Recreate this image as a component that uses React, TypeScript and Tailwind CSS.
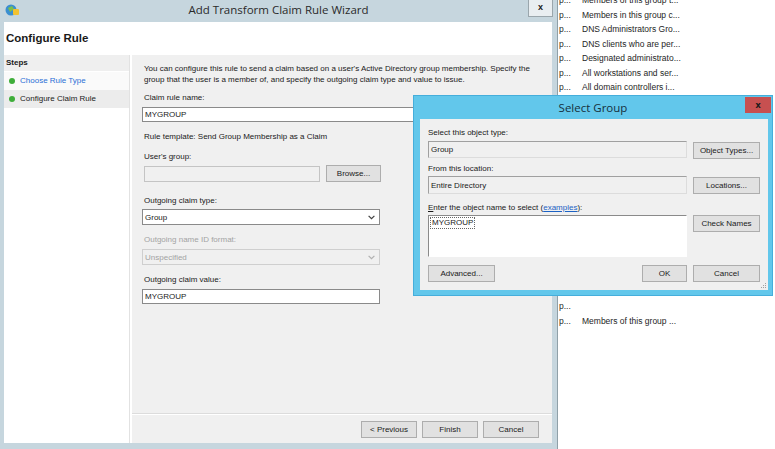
import React from "react";

function Btn({ children, className = "" }: { children: React.ReactNode; className?: string }) {
  return (
    <div
      className={`flex items-center justify-center h-[17px] bg-[#e1e1e1] border border-[#adadad] text-[8px] text-[#1a1a1a] ${className}`}
    >
      {children}
    </div>
  );
}

function Chevron({ color = "#404040" }: { color?: string }) {
  return (
    <svg width="7" height="5" viewBox="0 0 7 5">
      <path d="M0.6 0.8 L3.5 3.7 L6.4 0.8" stroke={color} fill="none" strokeWidth="1.2" />
    </svg>
  );
}

const listRows: (string | null)[] = [
  "Members of this group t...",
  "Members in this group c...",
  "DNS Administrators Gro...",
  "DNS clients who are per...",
  "Designated administrato...",
  "All workstations and ser...",
  "All domain controllers i...",
  null, null, null, null, null, null, null,
  null, null, null, null, null, null, null,
  "",
  "Members of this group ...",
];

export default function App() {
  return (
    <div className="relative w-[775px] h-[449px] overflow-hidden bg-white font-['Liberation_Sans',Arial,sans-serif] text-[#1a1a1a]">
      {/* background list window */}
      <div className="absolute left-[557px] top-0 right-0 bottom-0 bg-white border-l border-[#8fa0a8] text-[8.5px] text-[#1e1e1e]">
        <div className="mt-[-7px] flex flex-col">
          {listRows.map((r, i) => (
            <div key={i} className="h-[14.6px] flex items-center whitespace-nowrap">
              {r !== null && (
                <>
                  <span className="w-[24px] pl-[1px]">p...</span>
                  <span>{r}</span>
                </>
              )}
            </div>
          ))}
        </div>
      </div>

      {/* wizard window */}
      <div className="absolute left-0 top-0 w-[557px] h-[449px] bg-[#c6d6de] flex flex-col">
        <div className="h-[22px] flex items-start">
          <div className="w-[30px] h-[20px] flex items-center pl-[5px]">
            <svg width="15" height="14" viewBox="0 0 15 14">
              <circle cx="6" cy="7" r="5.5" fill="#3b8fd0" />
              <path d="M3 5 L7 3 L9 6 L5 9 Z" fill="#7cc04a" />
              <rect x="8" y="6" width="6" height="6" rx="1" fill="#f2c230" />
            </svg>
          </div>
          <div className="flex-1 h-[20px] flex items-center justify-center font-['Open_Sans',sans-serif] text-[11.5px] text-[#2a2a2a]">
            Add Transform Claim Rule Wizard
          </div>
          <div className="w-[30px] flex justify-end pr-[4px]">
            <div className="w-[25px] h-[17px] bg-[#e9eef1] border border-[#9aa6ac] border-t-0 flex items-center justify-center text-[9px] font-bold leading-none pb-[2px]">
              x
            </div>
          </div>
        </div>

        <div className="flex-1 ml-[4px] mr-[5px] mb-[6px] flex flex-col bg-[#f0f0f0]">
          <div className="h-[33px] bg-white flex items-center pl-[2px] font-bold text-[11.5px] text-[#1a1a1a]">
            Configure Rule
          </div>
          <div className="flex-1 flex">
            {/* steps panel */}
            <div className="w-[126px] bg-white border-r border-[#e2e2e2] flex flex-col text-[8px]">
              <div className="h-[17px] bg-[#efefef] flex items-center pl-[2px] font-bold border-b border-white">
                Steps
              </div>
              <div className="h-[18px] bg-[#fafafa] flex items-center pl-[5px] gap-[5px]">
                <span className="w-[6px] h-[6px] rounded-full bg-[#3fae3a]" />
                <span className="text-[#2a6fd6]">Choose Rule Type</span>
              </div>
              <div className="h-[18px] bg-[#ececec] flex items-center pl-[5px] gap-[5px]">
                <span className="w-[6px] h-[6px] rounded-full bg-[#3fae3a]" />
                <span>Configure Claim Rule</span>
              </div>
            </div>

            {/* main form */}
            <div className="flex-1 flex flex-col border-l-2 border-white">
              <div className="flex-1 pl-[10px] pt-[8px] text-[8px] leading-[11px] flex flex-col">
                <div className="pl-[2px] whitespace-nowrap">
                  You can configure this rule to send a claim based on a user's Active Directory group membership. Specify the
                  <br />
                  group that the user is a member of, and specify the outgoing claim type and value to issue.
                </div>
                <div className="pl-[2px] mt-[7px]">Claim rule name:</div>
                <div className="mt-[4px] h-[15px] w-[400px] bg-white border border-[#8a8a8a] flex items-center pl-[2px]">
                  MYGROUP
                </div>
                <div className="pl-[2px] mt-[9px]">Rule template: Send Group Membership as a Claim</div>
                <div className="pl-[2px] mt-[9px]">User's group:</div>
                <div className="mt-[3px] flex items-center gap-[6px] pl-[2px]">
                  <div className="w-[176px] h-[16px] bg-[#f0f0f0] border border-[#c4c4c4]" />
                  <Btn className="w-[55px]">Browse...</Btn>
                </div>
                <div className="pl-[2px] mt-[13px]">Outgoing claim type:</div>
                <div className="mt-[3px] h-[16px] w-[238px] bg-white border border-[#8a8a8a] flex items-center justify-between pl-[2px] pr-[4px]">
                  <span>Group</span>
                  <Chevron />
                </div>
                <div className="pl-[2px] mt-[9px] text-[#a3a3a3]">Outgoing name ID format:</div>
                <div className="mt-[4px] h-[16px] w-[238px] bg-[#f0f0f0] border border-[#cfcfcf] flex items-center justify-between pl-[2px] pr-[4px] text-[#a3a3a3]">
                  <span>Unspecified</span>
                  <Chevron color="#b0b0b0" />
                </div>
                <div className="pl-[2px] mt-[9px]">Outgoing claim value:</div>
                <div className="mt-[4px] h-[15px] w-[238px] bg-white border border-[#8a8a8a] flex items-center pl-[2px]">
                  MYGROUP
                </div>
              </div>
              <div className="h-[29px] border-t border-white shadow-[0_-1px_0_#dcdcdc] flex items-start pt-[6px] justify-end gap-[5px] pr-[13px]">
                <Btn className="w-[56px]">&lt; Previous</Btn>
                <Btn className="w-[56px]">Finish</Btn>
                <Btn className="w-[56px]">Cancel</Btn>
              </div>
            </div>
          </div>
        </div>
      </div>

      {/* Select Group dialog */}
      <div className="absolute left-[413px] top-[95px] w-[360px] h-[201px] bg-[#62c7eb] border border-[#45aedb] flex flex-col">
        <div className="h-[23px] relative flex items-center justify-center font-['Open_Sans',sans-serif] text-[11.5px] text-[#16303c]">
          Select Group
          <div className="absolute right-[1px] top-[1px] w-[26px] h-[16px] bg-[#c75050] flex items-center justify-center text-[9px] font-bold text-[#1a1a1a] leading-none pb-[2px]">
            x
          </div>
        </div>
        <div className="flex-1 ml-[6px] mr-[4px] mb-[5px] bg-[#f0f0f0] pl-[8px] pr-[8px] pt-[8px] text-[8px] leading-[11px] flex flex-col relative">
          <div>Select this object type:</div>
          <div className="mt-[3px] flex gap-[6px]">
            <div className="w-[259px] h-[17px] bg-[#f0f0f0] border border-[#a0a0a0] border-b-[#dcdcdc] border-r-[#dcdcdc] flex items-center pl-[2px]">
              Group
            </div>
            <Btn className="w-[67px] mt-[1px]">Object Types...</Btn>
          </div>
          <div className="mt-[4px]">From this location:</div>
          <div className="mt-[2px] flex gap-[6px]">
            <div className="w-[259px] h-[18px] bg-[#f0f0f0] border border-[#a0a0a0] border-b-[#dcdcdc] border-r-[#dcdcdc] flex items-center pl-[2px]">
              Entire Directory
            </div>
            <Btn className="w-[67px] mt-[1px]">Locations...</Btn>
          </div>
          <div className="mt-[8px]">
            <span className="underline">E</span>nter the object name to select (
            <span className="text-[#1c62c4] underline">examples</span>):
          </div>
          <div className="mt-[2px] flex gap-[6px]">
            <div className="w-[259px] h-[42px] bg-white border border-[#8a8a8a] border-b-white border-r-white pl-[1px] pt-[1px]">
              <span className="inline-block border border-dotted border-[#666] px-[1px] leading-[10px]">MYGROUP</span>
            </div>
            <Btn className="w-[67px]">Check Names</Btn>
          </div>
          <div className="mt-[8px] flex">
            <Btn className="w-[67px]">Advanced...</Btn>
            <div className="flex-1" />
            <Btn className="w-[45px] border-[#3c8ad0]">OK</Btn>
            <Btn className="w-[67px] ml-[6px]">Cancel</Btn>
          </div>
          <svg className="absolute right-[1px] bottom-[1px]" width="6" height="6" viewBox="0 0 6 6">
            <rect x="4" y="0" width="1" height="1" fill="#a0a0a0" />
            <rect x="2" y="2" width="1" height="1" fill="#a0a0a0" />
            <rect x="4" y="2" width="1" height="1" fill="#a0a0a0" />
            <rect x="0" y="4" width="1" height="1" fill="#a0a0a0" />
            <rect x="2" y="4" width="1" height="1" fill="#a0a0a0" />
            <rect x="4" y="4" width="1" height="1" fill="#a0a0a0" />
          </svg>
        </div>
      </div>
    </div>
  );
}
